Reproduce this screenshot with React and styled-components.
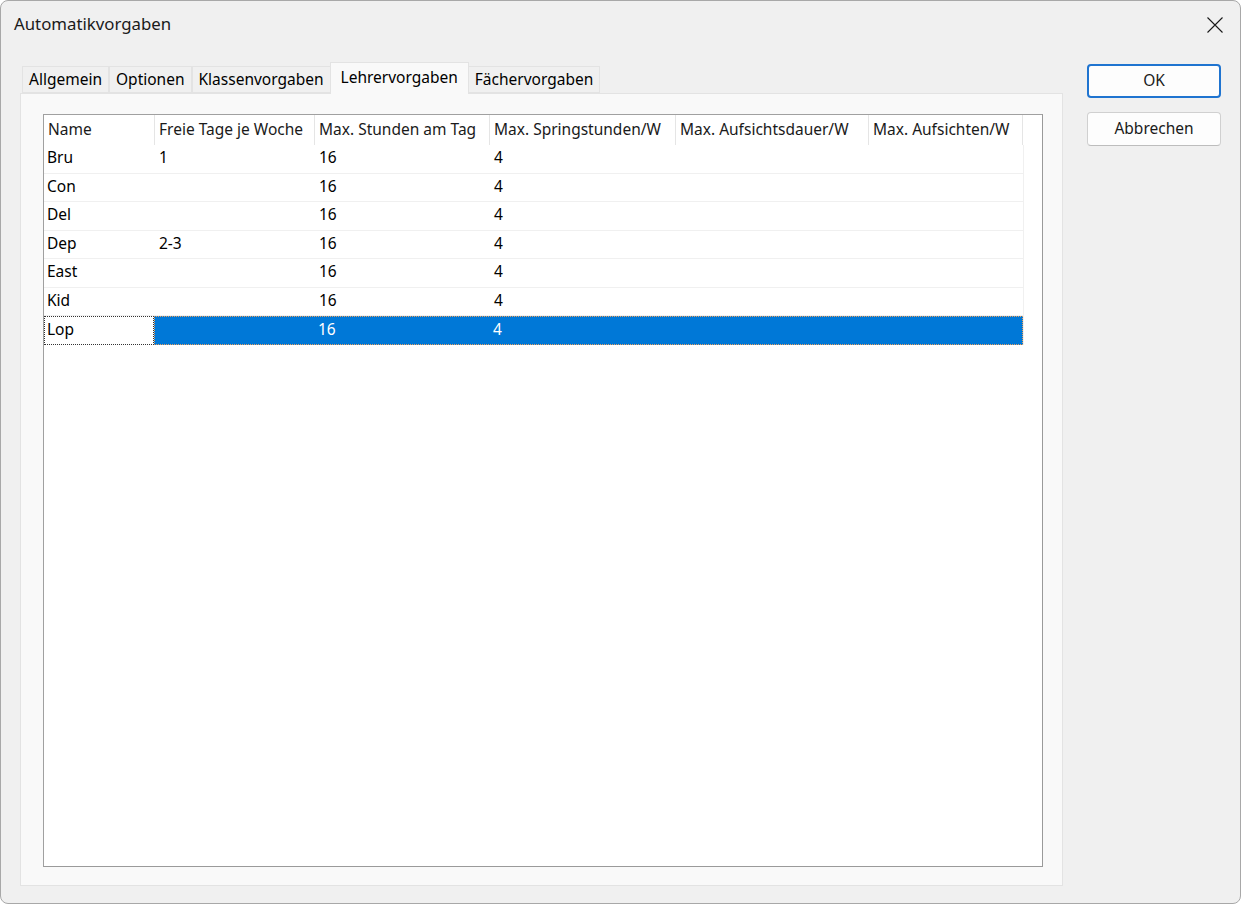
import React from "react";
import styled, { createGlobalStyle } from "styled-components";

const GlobalStyle = createGlobalStyle`
  html, body { margin: 0; padding: 0; background: #ffffff; }
  body { font-family: "Noto Sans", "Open Sans", sans-serif; font-size: 15.5px; color: #000; }
`;

const Window = styled.div`
  width: 1241px;
  height: 904px;
  box-sizing: border-box;
  border: 1px solid #a8a8a8;
  border-radius: 8px;
  background: #f0f0f0;
  display: flex;
  flex-direction: column;
  overflow: hidden;
`;

const TitleBar = styled.div`
  height: 47px;
  display: flex;
  align-items: center;
  justify-content: space-between;
  padding-left: 13px;
  flex-shrink: 0;
`;

const Title = styled.div`
  font-size: 16.8px;
  color: #1a1a1a;
  margin-top: -3px;
`;

const CloseButton = styled.div`
  width: 46px;
  height: 47px;
  display: flex;
  align-items: center;
  justify-content: center;
  margin-right: 2px;
`;

const Body = styled.div`
  flex: 1;
  display: flex;
  padding: 14px 19px 17px 19px;
  gap: 24px;
  min-height: 0;
`;

const TabControl = styled.div`
  width: 1043px;
  display: flex;
  flex-direction: column;
`;

const TabStrip = styled.div`
  display: flex;
  align-items: flex-end;
  height: 31px;
  padding-left: 2px;
  position: relative;
  z-index: 1;
`;

const Tab = styled.div`
  box-sizing: border-box;
  height: ${(p) => (p.$active ? "32px" : "27px")};
  padding: 0 ${(p) => (p.$active ? "10px" : "6px")};
  margin-bottom: ${(p) => (p.$active ? "-1px" : "0")};
  margin-left: ${(p) => (p.$active ? "-1px" : "0")};
  margin-right: ${(p) => (p.$active ? "-1px" : "0")};
  border: 1px solid #e3e3e3;
  border-bottom: ${(p) => (p.$active ? "none" : "1px solid #e3e3e3")};
  background: ${(p) => (p.$active ? "#f9f9f9" : "#f0f0f0")};
  display: flex;
  align-items: ${(p) => (p.$active ? "flex-start" : "center")};
  padding-top: ${(p) => (p.$active ? "3px" : "0")};
  padding-bottom: ${(p) => (p.$active ? "0" : "1px")};
  white-space: nowrap;
  color: #000;
  position: relative;
  z-index: ${(p) => (p.$active ? 2 : 1)};
`;

const Panel = styled.div`
  flex: 1;
  background: #f9f9f9;
  border: 1px solid #e3e3e3;
  padding: 20px 19px 18px 22px;
  display: flex;
  min-height: 0;
`;

const ListView = styled.div`
  flex: 1;
  background: #ffffff;
  border: 1px solid #a0a0a0;
  border-right-color: #9a9a9a;
  border-bottom-color: #9a9a9a;
  display: flex;
  flex-direction: column;
`;

const HeaderRow = styled.div`
  display: flex;
  height: 30px;
`;

const HeaderCell = styled.div`
  box-sizing: border-box;
  width: ${(p) => p.$w}px;
  padding-left: 4px;
  padding-bottom: 2px;
  border-right: 1px solid #e5e5e5;
  display: flex;
  align-items: center;
  white-space: nowrap;
  overflow: hidden;
  color: #1a1a1a;
`;

const Rows = styled.div`
  width: 979px;
  border-right: 1px solid #f0f0f0;
`;

const Row = styled.div`
  display: flex;
  height: 28.5px;
  box-sizing: border-box;
  border-bottom: ${(p) => (p.$selected ? "none" : "1px solid #f0f0f0")};
`;

const Cell = styled.div`
  box-sizing: border-box;
  width: ${(p) => p.$w}px;
  padding-left: ${(p) => (p.$first ? 3 : 4)}px;
  padding-bottom: 3px;
  display: flex;
  align-items: center;
  white-space: nowrap;
  overflow: hidden;
`;

const FocusCell = styled.div`
  box-sizing: border-box;
  width: ${(p) => p.$w}px;
  padding-left: 2px;
  padding-bottom: 2px;
  border: 1px dotted #333;
  display: flex;
  align-items: center;
  white-space: nowrap;
`;

const SelectedBand = styled.div`
  flex: 1;
  display: flex;
  background: #0078d7;
  color: #ffffff;
  border: 1px dotted #e8a060;
  box-sizing: border-box;
`;

const SelectedCell = styled.div`
  box-sizing: border-box;
  width: ${(p) => p.$w}px;
  padding-left: 4px;
  padding-bottom: 2px;
  display: flex;
  align-items: center;
  white-space: nowrap;
`;

const ButtonColumn = styled.div`
  display: flex;
  flex-direction: column;
  gap: 14px;
  padding-top: 2px;
`;

const Button = styled.div`
  box-sizing: border-box;
  width: 134px;
  height: 34px;
  border-radius: 4px;
  background: #fdfdfd;
  border: ${(p) => (p.$default ? "2px solid #1f74d0" : "1px solid #d0d0d0")};
  border-bottom-color: ${(p) => (p.$default ? "#1f74d0" : "#bdbdbd")};
  display: flex;
  align-items: center;
  justify-content: center;
  padding-bottom: 2px;
  color: #1a1a1a;
`;

const columns = [
  { title: "Name", w: 111 },
  { title: "Freie Tage je Woche", w: 160 },
  { title: "Max. Stunden am Tag", w: 175 },
  { title: "Max. Springstunden/W", w: 186 },
  { title: "Max. Aufsichtsdauer/W", w: 193 },
  { title: "Max. Aufsichten/W", w: 154 },
];

const rows = [
  ["Bru", "1", "16", "4", "", ""],
  ["Con", "", "16", "4", "", ""],
  ["Del", "", "16", "4", "", ""],
  ["Dep", "2-3", "16", "4", "", ""],
  ["East", "", "16", "4", "", ""],
  ["Kid", "", "16", "4", "", ""],
  ["Lop", "", "16", "4", "", ""],
];

const tabs = ["Allgemein", "Optionen", "Klassenvorgaben", "Lehrervorgaben", "Fächervorgaben"];

export default function App() {
  const selected = 6;
  return (
    <>
      <GlobalStyle />
      <Window>
        <TitleBar>
          <Title>Automatikvorgaben</Title>
          <CloseButton>
            <svg width="16" height="16" viewBox="0 0 16 16">
              <path d="M0.5 0.5 L15.5 15.5 M15.5 0.5 L0.5 15.5" stroke="#1a1a1a" strokeWidth="1.1" fill="none" />
            </svg>
          </CloseButton>
        </TitleBar>
        <Body>
          <TabControl>
            <TabStrip>
              {tabs.map((t) => (
                <Tab key={t} $active={t === "Lehrervorgaben"}>{t}</Tab>
              ))}
            </TabStrip>
            <Panel>
              <ListView>
                <HeaderRow>
                  {columns.map((c) => (
                    <HeaderCell key={c.title} $w={c.w}>{c.title}</HeaderCell>
                  ))}
                </HeaderRow>
                <Rows>
                  {rows.map((r, ri) =>
                    ri === selected ? (
                      <Row key={ri} $selected>
                        <FocusCell $w={columns[0].w}>{r[0]}</FocusCell>
                        <SelectedBand>
                          {r.slice(1).map((v, ci) => (
                            <SelectedCell key={ci} $w={columns[ci + 1].w - (ci === 0 ? 1 : 0)}>{v}</SelectedCell>
                          ))}
                        </SelectedBand>
                      </Row>
                    ) : (
                      <Row key={ri}>
                        {r.map((v, ci) => (
                          <Cell key={ci} $w={columns[ci].w} $first={ci === 0}>{v}</Cell>
                        ))}
                      </Row>
                    )
                  )}
                </Rows>
              </ListView>
            </Panel>
          </TabControl>
          <ButtonColumn>
            <Button $default>OK</Button>
            <Button>Abbrechen</Button>
          </ButtonColumn>
        </Body>
      </Window>
    </>
  );
}
